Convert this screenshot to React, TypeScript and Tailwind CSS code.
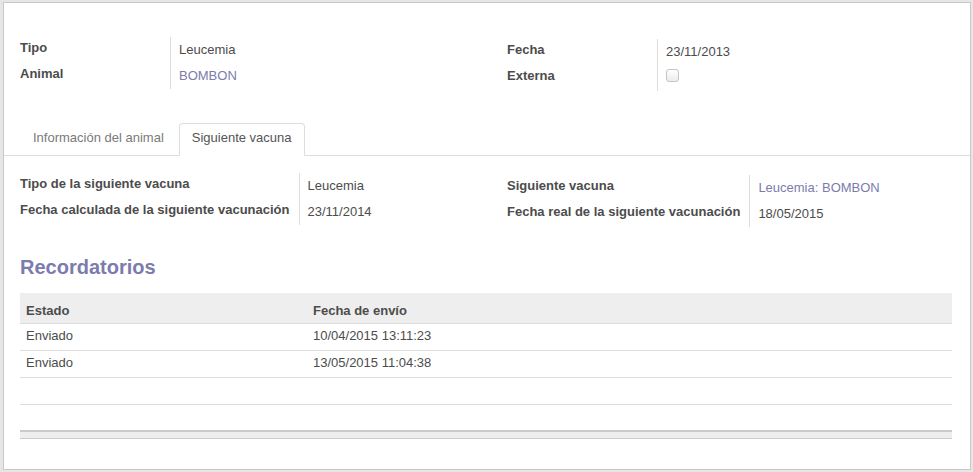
type Row = { label: string; value?: string; link?: boolean; checkbox?: boolean };

function Group({ rows, className }: { rows: Row[]; className?: string }) {
  return (
    <div className={`grid grid-cols-[minmax(150px,max-content)_1fr] content-start ${className ?? ""}`}>
      {rows.map((r) => (
        <div key={r.label} className="contents">
          <div className="h-[26px] pt-[2px] pr-[9px] font-bold leading-[18px] whitespace-nowrap">{r.label}</div>
          <div className="h-[26px] border-l border-[#dddddd] pl-2 pt-[4px] leading-[18px]">
            {r.checkbox ? (
              <div className="h-[13px] w-[13px] rounded-[3px] border border-[#c4c4c4] bg-gradient-to-b from-white to-[#ececec]" />
            ) : (
              <span className={r.link ? "text-[#7c7bad]" : ""}>{r.value}</span>
            )}
          </div>
        </div>
      ))}
    </div>
  );
}

const reminders = [
  { estado: "Enviado", fecha: "10/04/2015 13:11:23" },
  { estado: "Enviado", fecha: "13/05/2015 11:04:38" },
];

export default function App() {
  return (
    <div className="h-[472px] w-[973px] overflow-hidden bg-[#e6e6e6] pt-[2px] pl-[3px] font-['Liberation_Sans',Arial,sans-serif] text-[13px] text-[#4c4c4c]">
      <div className="h-[468px] w-[968px] border border-[#c8c8c8] bg-white">
        {/* header fields */}
        <div className="mt-[34px] flex pl-4">
          <Group
            className="w-[487px]"
            rows={[
              { label: "Tipo", value: "Leucemia" },
              { label: "Animal", value: "BOMBON", link: true },
            ]}
          />
          <Group
            className="mt-[2px] flex-1"
            rows={[
              { label: "Fecha", value: "23/11/2013" },
              { label: "Externa", checkbox: true },
            ]}
          />
        </div>

        {/* tabs */}
        <div className="mt-[32px] flex items-end border-b border-[#dddddd] pl-4">
          <div className="mr-[2px] h-8 px-[13px] pt-[6px] leading-[18px] text-[#7a7a7a]">Información del animal</div>
          <div className="-mb-px h-[33px] rounded-t-[4px] border border-b-white border-[#dddddd] bg-white px-3 pt-[5px] leading-[18px] text-[#555555]">
            Siguiente vacuna
          </div>
        </div>

        {/* tab content */}
        <div className="mt-[17px] flex pl-4">
          <Group
            className="w-[487px]"
            rows={[
              { label: "Tipo de la siguiente vacuna", value: "Leucemia" },
              { label: "Fecha calculada de la siguiente vacunación", value: "23/11/2014" },
            ]}
          />
          <Group
            className="mt-[2px] flex-1"
            rows={[
              { label: "Siguiente vacuna", value: "Leucemia: BOMBON", link: true },
              { label: "Fecha real de la siguiente vacunación", value: "18/05/2015" },
            ]}
          />
        </div>

        <div className="px-4">
          <h2 className="mt-[28px] text-[20px] leading-[24px] font-bold text-[#7c7bad]">Recordatorios</h2>

          <div className="mt-[14px] w-[932px]">
            <div className="flex border-b border-[#dcdcdc] bg-[#eeeeee] pt-[9px] pb-[3px] font-bold leading-[18px]">
              <div className="w-[287px] pl-[6px]">Estado</div>
              <div className="pl-[6px]">Fecha de envío</div>
            </div>
            {reminders.map((r, i) => (
              <div key={i} className="flex h-[27px] border-b border-[#dcdcdc] pt-[3px] leading-[18px]">
                <div className="w-[287px] pl-[6px]">{r.estado}</div>
                <div className="pl-[6px]">{r.fecha}</div>
              </div>
            ))}
            <div className="h-[27px] border-b border-[#dcdcdc]" />
            <div className="h-[25px]" />
            <div className="h-[9px] border-t-2 border-b border-t-[#cacaca] border-b-[#cccccc] bg-[#eeeeee]" />
          </div>
        </div>
      </div>
    </div>
  );
}
